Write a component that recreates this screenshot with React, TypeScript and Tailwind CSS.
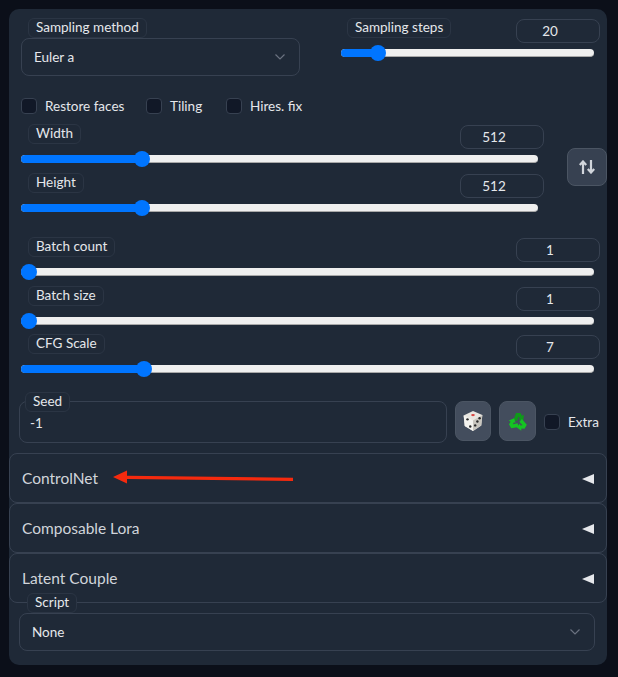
import React from "react";

function Label({ children, className = "" }: { children: React.ReactNode; className?: string }) {
  return (
    <span className={`flex h-[20px] w-fit items-center rounded-[6px] border border-[#2b3544] bg-[#1f2937] px-[7px] text-[13.5px] leading-none text-[#e5e7eb] ${className}`}>
      {children}
    </span>
  );
}

function Slider({ fill }: { fill: number }) {
  return (
    <div className="flex h-[16px] items-center">
      <div className="relative h-[8px] w-full rounded-full border-b border-[#a8a8a8] bg-[#efefef]">
        <div className="h-[8px] rounded-l-full bg-[#0075ff]" style={{ width: fill }} />
        <div className="absolute top-[-4px] h-[16px] w-[16px] rounded-full bg-[#0075ff]" style={{ left: fill - 8 }} />
      </div>
    </div>
  );
}

function NumBox({ value }: { value: string }) {
  return (
    <div className="mr-[-6px] mt-[1px] flex h-[24px] w-[84px] shrink-0 items-center justify-center rounded-[8px] border border-[#374151] pr-[16px] text-[13.5px] text-[#e5e7eb]">
      {value}
    </div>
  );
}

function SliderRow({ label, value, fill, className = "" }: { label: string; value: string; fill: number; className?: string }) {
  return (
    <div className={className}>
      <div className="flex items-start justify-between pl-[7px]">
        <Label>{label}</Label>
        <NumBox value={value} />
      </div>
      <div className="mt-[2px]">
        <Slider fill={fill} />
      </div>
    </div>
  );
}

function Check({ label, className = "" }: { label: string; className?: string }) {
  return (
    <label className={`flex items-center gap-[8px] text-[13.5px] text-[#e5e7eb] ${className}`}>
      <span className="h-[16px] w-[16px] rounded-[4px] border border-[#374151] bg-[#111827]" />
      {label}
    </label>
  );
}

function Chevron() {
  return (
    <svg width="10" height="6" viewBox="0 0 10 6" fill="none" stroke="#6b7280" strokeWidth="1.2">
      <path d="M0.5 0.5L5 5L9.5 0.5" />
    </svg>
  );
}

function Accordion({ title }: { title: string }) {
  return (
    <div className="flex h-[50px] items-center justify-between rounded-[8px] border border-[#374151] pl-[12px] pr-[12px] pt-[1px] text-[15.5px] text-[#d1d5db]">
      <span>{title}</span>
      <svg width="12" height="10" viewBox="0 0 12 10" fill="#e5e7eb">
        <path d="M0 5L12 0V10Z" />
      </svg>
    </div>
  );
}

function Dice() {
  return (
    <svg width="22" height="22" viewBox="0 0 20 20">
      <path d="M10 1L18.5 4.5L17.5 14L10 19L2.5 14.5L1.5 5Z" fill="#e8e6e1" />
      <path d="M10 9.5L18.5 4.5L17.5 14L10 19Z" fill="#c9c6bf" />
      <path d="M10 9.5L1.5 5L2.5 14.5L10 19Z" fill="#f4f3ef" />
      <ellipse cx="10" cy="4.6" rx="1.7" ry="1" fill="#d8433f" />
      <circle cx="5" cy="8.5" r="1.1" fill="#2a2a2a" />
      <circle cx="7.5" cy="15" r="1.1" fill="#2a2a2a" />
      <circle cx="16" cy="7.5" r="1.1" fill="#2a2a2a" />
      <circle cx="14" cy="10.5" r="1.1" fill="#2a2a2a" />
      <circle cx="12" cy="14" r="1.1" fill="#2a2a2a" />
    </svg>
  );
}

function Recycle() {
  const arrow = "M5.5 9L8 2H12.5L14 4.8L16 3.8L15.2 9.5L10.3 8.4L11.8 7.3L10.6 5.4L9 10Z";
  return (
    <svg width="20" height="20" viewBox="0 0 20 20">
      <path d={arrow} fill="#0f9a1a" />
      <path d={arrow} fill="#14c422" transform="rotate(120 10 11)" />
      <path d={arrow} fill="#14c422" transform="rotate(240 10 11)" />
    </svg>
  );
}

export default function App() {
  return (
    <div className="h-[677px] w-[618px] bg-[#0b0f19] pl-[9px] pt-[9px] [font-family:Lato,sans-serif]">
      <div className="relative h-[656px] w-[598px] rounded-[10px] bg-[#1f2937]">
        <div className="px-[12px] pt-[9px]">
          <div className="flex">
            <div className="w-[279px]">
              <Label className="ml-[7px]">Sampling method</Label>
              <div className="flex h-[38px] items-center justify-between rounded-[8px] border border-[#374151] pl-[12px] pr-[14px] text-[13.5px] text-[#e5e7eb]">
                <span>Euler a</span>
                <Chevron />
              </div>
            </div>
            <div className="ml-[41px] w-[253px]">
              <div className="flex items-start justify-between pl-[6px]">
                <Label>Sampling steps</Label>
                <NumBox value="20" />
              </div>
              <div className="mt-[2px]">
                <Slider fill={37} />
              </div>
            </div>
          </div>

          <div className="mt-[22px] flex h-[16px]">
            <Check label="Restore faces" className="w-[125px]" />
            <Check label="Tiling" className="w-[80px]" />
            <Check label="Hires. fix" />
          </div>

          <div className="mt-[10px] flex items-center">
            <div className="w-[517px]">
              <SliderRow label="Width" value="512" fill={121} />
              <SliderRow label="Height" value="512" fill={121} className="mt-[6px]" />
            </div>
            <button className="ml-[29px] mr-[-12px] mt-[-6px] flex h-[38px] w-[40px] items-center justify-center rounded-[8px] border border-[#4b5563] bg-[#374151]">
              <svg width="16" height="14" viewBox="0 0 16 14" fill="none" stroke="#d1d5db" strokeWidth="2.2">
                <path d="M4 14V1.5M0.8 5L4 1.5L7.2 5" />
                <path d="M12 0V12.5M8.8 9L12 12.5L15.2 9" />
              </svg>
            </button>
          </div>

          <div className="mt-[21px] w-[573px]">
            <SliderRow label="Batch count" value="1" fill={8} />
            <SliderRow label="Batch size" value="1" fill={8} className="mt-[6px]" />
            <SliderRow label="CFG Scale" value="7" fill={123} className="mt-[5px]" />
          </div>
        </div>

        <div className="mt-[24px] flex items-start pl-[10px]">
          <div className="relative h-[42px] w-[428px] rounded-[8px] border border-[#374151] pl-[10px] pt-[12px] text-[13.5px] leading-[18px] text-[#e5e7eb]">
            <Label className="absolute left-[5px] top-[-10px]">Seed</Label>
            -1
          </div>
          <button className="ml-[8px] flex h-[40px] w-[36px] items-center justify-center rounded-[8px] border border-[#4b5563] bg-[#434d5d]">
            <Dice />
          </button>
          <button className="ml-[8px] flex h-[40px] w-[37px] items-center justify-center rounded-[8px] border border-[#4b5563] bg-[#434d5d]">
            <Recycle />
          </button>
          <Check label="Extra" className="ml-[8px] mt-[11px]" />
        </div>

        <div className="mt-[10px]">
          <Accordion title="ControlNet" />
          <Accordion title="Composable Lora" />
          <Accordion title="Latent Couple" />
        </div>

        <div className="relative mx-[10px] mt-[10px] flex h-[38px] w-[576px] items-center justify-between rounded-[8px] border border-[#374151] pl-[12px] pr-[14px] text-[13.5px] text-[#e5e7eb]">
          <Label className="absolute left-[7px] top-[-21px]">Script</Label>
          <span>None</span>
          <Chevron />
        </div>

        <svg className="absolute left-[100px] top-[458px]" width="190" height="20" viewBox="0 0 190 20">
          <path d="M4 10L18 3.5V8.8L184 10.8V14L18 12V16.5Z" fill="#f52a0e" />
        </svg>
      </div>
    </div>
  );
}
